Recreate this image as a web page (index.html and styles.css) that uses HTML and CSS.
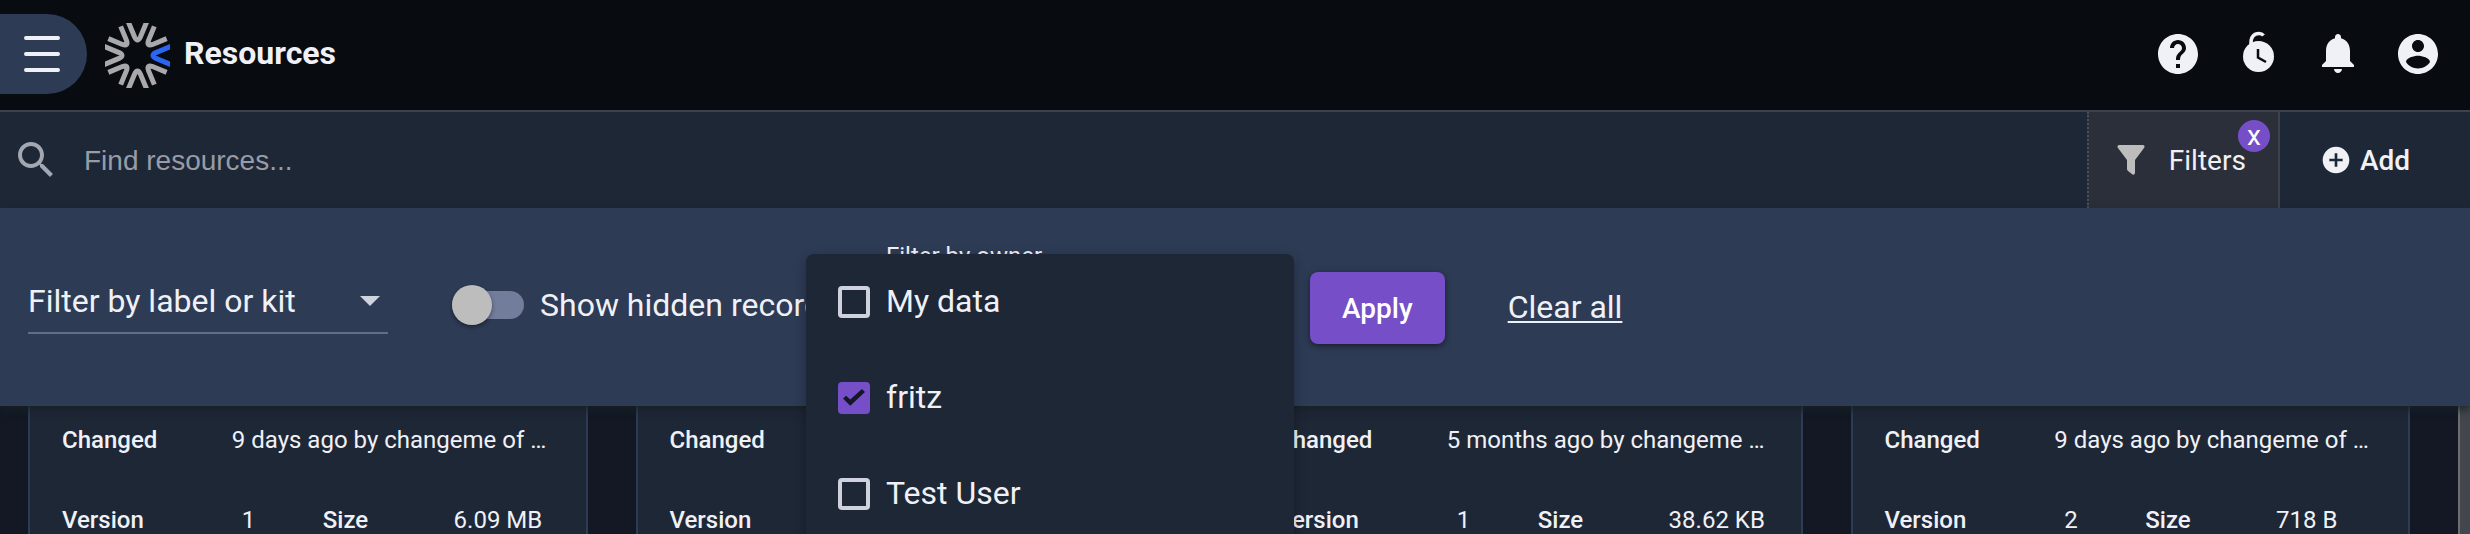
FILE: index.html
```html
<!DOCTYPE html>
<html lang="en">
<head>
<meta charset="utf-8">
<title>Resources</title>
<link rel="stylesheet" href="styles.css">
</head>
<body>
<header class="topbar">
  <button class="menu-toggle" aria-label="Open menu">
    <svg width="36" height="36" viewBox="0 0 36 36"><path d="M2 2H34M2 18H34M2 34H34" stroke="#f0f1f6" stroke-width="4" stroke-linecap="round"/></svg>
  </button>
  <svg class="logo" width="65" height="65" viewBox="-32.5 -32.5 65 65" fill="none" stroke-width="5">
    <defs>
      <path id="ray" d="M38 -11L18.500 -2.900Q12.500 0 18.500 2.900L38 11"/>
      <path id="ray-short" d="M32.500 -8.700L18.500 -2.900Q12.500 0 18.500 2.900L32.500 8.700"/>
    </defs>
    <g stroke="#a9a9ab">
      <use href="#ray-short" transform="rotate(45)"/>
      <use href="#ray" transform="rotate(90)"/>
      <use href="#ray-short" transform="rotate(135)"/>
      <use href="#ray" transform="rotate(180)"/>
      <use href="#ray-short" transform="rotate(225)"/>
      <use href="#ray" transform="rotate(270)"/>
      <use href="#ray-short" transform="rotate(315)"/>
    </g>
    <use href="#ray" stroke="#2b66f0"/>
  </svg>
  <h1 class="title">Resources</h1>
  <nav class="tools">
    <button class="tool" aria-label="Help"><svg width="48" height="48" viewBox="0 0 24 24"><path d="M12 2C6.480 2 2 6.480 2 12s4.480 10 10 10 10-4.480 10-10S17.520 2 12 2zm1 17h-2v-2h2v2zm2.070-7.750l-.9.920C13.450 12.900 13 13.500 13 15h-2v-.5c0-1.100.45-2.100 1.170-2.830l1.240-1.260c.37-.36.590-.86.590-1.410 0-1.100-.9-2-2-2s-2 .9-2 2H8c0-2.210 1.790-4 4-4s4 1.790 4 4c0 .88-.36 1.680-.93 2.250z"/></svg></button>
    <button class="tool" aria-label="Timer"><svg width="48" height="48" viewBox="0 0 48 48"><circle cx="24.500" cy="26.500" r="15.500"/><path d="M17 14C16.500 7 20 3.500 25 3.500Q28 3.500 29.500 5.500" fill="none" stroke="#f0f1f6" stroke-width="3.500"/><path d="M24 19V27.500L32 32" fill="none" stroke="#080b10" stroke-width="2.500"/></svg></button>
    <button class="tool" aria-label="Notifications"><svg width="48" height="48" viewBox="0 0 24 24"><path d="M12 21.500c1.100 0 2-.9 2-2h-4c0 1.100.89 2 2 2zm6-6v-5c0-3.070-1.640-5.640-4.500-6.320V3.500c0-.83-.67-1.500-1.500-1.500s-1.500.67-1.500 1.500v.68C7.630 4.860 6 7.420 6 10.500v5l-2 2v1h16v-1l-2-2z"/></svg></button>
    <button class="tool" aria-label="Account"><svg width="48" height="48" viewBox="0 0 24 24"><path d="M12 2C6.480 2 2 6.480 2 12s4.480 10 10 10 10-4.480 10-10S17.520 2 12 2zm0 3c1.660 0 3 1.340 3 3s-1.340 3-3 3-3-1.340-3-3 1.340-3 3-3zm0 14.200c-2.500 0-4.710-1.280-6-3.220.03-1.990 4-3.080 6-3.080 1.990 0 5.970 1.090 6 3.080-1.290 1.940-3.500 3.220-6 3.220z"/></svg></button>
  </nav>
</header>

<div class="searchbar">
  <label class="search">
    <svg width="48" height="48" viewBox="0 0 24 24" fill="#a3a7b1"><path d="M15.500 14h-.79l-.28-.27C15.410 12.590 16 11.110 16 9.500 16 5.910 13.090 3 9.500 3S3 5.910 3 9.500 5.910 16 9.500 16c1.610 0 3.090-.59 4.230-1.570l.27.28v.79l5 4.990L20.490 19l-4.990-5zm-6 0C7.010 14 5 11.990 5 9.500S7.010 5 9.500 5 14 7.010 14 9.500 11.990 14 9.500 14z"/></svg>
    <input class="search-input" type="text" aria-label="Find resources" placeholder="Find resources...">
  </label>
  <button class="filters">
    <svg width="28" height="30" viewBox="0 0 28 30" fill="#bdbdbd"><path d="M2 0H26Q28.500 .5 27 3L18 15V28Q17.500 30.500 15.500 29.500L11 26Q10 25 10 24V15L1 3Q-.5 .5 2 0z"/></svg>
    <span class="action-text">Filters</span>
    <span class="badge">x</span>
  </button>
  <button class="add">
    <svg width="32" height="32" viewBox="0 0 24 24" fill="#f0f1f6"><path d="M12 2C6.480 2 2 6.480 2 12s4.480 10 10 10 10-4.480 10-10S17.520 2 12 2zm5 11h-4v4h-2v-4H7v-2h4V7h2v4h4v2z"/></svg>
    <span class="action-text">Add</span>
  </button>
</div>

<section class="filter-panel">
  <div class="kit-field">
    <select class="kit-select" aria-label="Filter by label or kit"><option>Filter by label or kit</option></select>
    <svg class="arrow" width="20" height="10" viewBox="0 0 20 10"><path d="M0 0H20L10 10z" fill="#cfd3df"/></svg>
  </div>
  <label class="switch">
    <input class="switch-input" type="checkbox" role="switch">
    <span>Show hidden records</span>
  </label>
  <div class="owner-field">
    <label class="owner-label" for="owner">Filter by owner</label>
    <select class="owner-select" id="owner"><option>fritz</option></select>
    <div class="owner-menu">
      <label class="option"><input class="check" type="checkbox"><span class="option-text">My data</span></label>
      <label class="option"><input class="check" type="checkbox" checked><span class="option-text">fritz</span></label>
      <label class="option"><input class="check" type="checkbox"><span class="option-text">Test User</span></label>
    </div>
  </div>
  <button class="apply">Apply</button>
  <a class="clear" href="#">Clear all</a>
</section>

<main class="results">
  <div class="cards">
    <article class="card">
      <dl class="row changed"><dt>Changed</dt><dd>9 days ago by changeme of …</dd></dl>
      <dl class="row facts"><dt>Version</dt><dd>1</dd><dt>Size</dt><dd>6.09 MB</dd></dl>
    </article>
    <article class="card">
      <dl class="row changed"><dt>Changed</dt><dd>9 days ago by changeme of …</dd></dl>
      <dl class="row facts"><dt>Version</dt><dd>1</dd><dt>Size</dt><dd>6.09 MB</dd></dl>
    </article>
    <article class="card">
      <dl class="row changed"><dt>Changed</dt><dd>5 months ago by changeme …</dd></dl>
      <dl class="row facts"><dt>Version</dt><dd>1</dd><dt>Size</dt><dd>38.62 KB</dd></dl>
    </article>
    <article class="card">
      <dl class="row changed"><dt>Changed</dt><dd>9 days ago by changeme of …</dd></dl>
      <dl class="row facts"><dt>Version</dt><dd>2</dd><dt>Size</dt><dd>718 B</dd></dl>
    </article>
  </div>
  <div class="scrollbar"></div>
</main>
</body>
</html>
```
FILE: styles.css
```css
* { box-sizing: border-box; }

body {
  margin: 0;
  height: 100vh;
  overflow: hidden;
  display: flex;
  flex-direction: column;
  background: #131824;
  color: #f0f1f6;
  font-family: Roboto, "Liberation Sans", sans-serif;
  font-size: 32px;
  line-height: 38px;
}

button {
  font: inherit;
  color: inherit;
  background: none;
  border: 0;
  padding: 0;
  cursor: pointer;
}

svg { display: block; flex: none; }

.topbar {
  display: flex;
  align-items: center;
  flex: none;
  height: 112px;
  padding: 0 28px 2px 0;
  background: #080b10;
  border-bottom: 2px solid #3c434d;
}

.menu-toggle {
  width: 87px;
  height: 80px;
  padding-left: 24px;
  background: #2d3b55;
  border-radius: 0 40px 40px 0;
}

.logo { margin: 2px 14px 0 18px; overflow: hidden; }

.title { margin: 0; padding-bottom: 2px; font-size: 32px; font-weight: 700; }

.tools { display: flex; gap: 32px; margin-left: auto; }

.tool { fill: #f0f1f6; }

.searchbar {
  display: flex;
  flex: none;
  height: 96px;
  background: #1e2736;
  font-size: 28px;
}

.search {
  display: flex;
  align-items: center;
  gap: 24px;
  flex: 1;
  padding-left: 12px;
}

.search-input {
  flex: 1;
  padding: 2px 0 0;
  border: 0;
  outline: 0;
  background: none;
  color: #f0f1f6;
  font-family: "Liberation Sans", Arial, sans-serif;
  font-size: 28px;
}

.search-input::placeholder { color: #989ca5; opacity: 1; }

.action-text { padding-top: 2px; }

.filters {
  position: relative;
  display: flex;
  align-items: center;
  gap: 24px;
  padding: 0 32px 0 28px;
  background: #2b2f39;
  border-left: 2px dotted #4a4f58;
  border-right: 2px solid #3c434d;
}

.badge {
  position: absolute;
  top: 8px;
  right: 8px;
  width: 32px;
  height: 32px;
  border-radius: 50%;
  background: #754ec8;
  color: #fff;
  line-height: 32px;
}

.add {
  display: flex;
  align-items: center;
  gap: 8px;
  padding: 0 60px 0 40px;
  font-weight: 500;
}

.filter-panel {
  position: relative;
  z-index: 1;
  display: flex;
  align-items: center;
  flex: none;
  padding: 34px 28px;
  background: #2d3b55;
  box-shadow: 0 4px 8px rgba(22, 32, 38, 0.8);
}

.kit-field {
  display: flex;
  align-items: center;
  width: 360px;
  height: 54px;
  padding: 0 8px 10px 0;
  border-bottom: 2px solid #626d8b;
}

.kit-select {
  flex: 1;
  min-width: 0;
  padding: 0;
  border: 0;
  outline: 0;
  appearance: none;
  background: none;
  color: inherit;
  font: inherit;
}

.switch {
  display: flex;
  align-items: center;
  gap: 16px;
  width: 386px;
  margin-left: 64px;
  padding-bottom: 4px;
  white-space: nowrap;
}

.switch-input {
  display: flex;
  align-items: center;
  flex: none;
  width: 72px;
  height: 28px;
  margin: 0;
  appearance: none;
  border-radius: 14px;
  background: #727d9b;
}

.switch-input::before {
  content: "";
  width: 40px;
  height: 40px;
  border-radius: 50%;
  background: #bdbdbd;
  box-shadow: 0 2px 4px rgba(0, 0, 0, 0.4);
}

.owner-field {
  position: relative;
  display: flex;
  flex-direction: column;
  width: 424px;
  height: 130px;
  padding-left: 48px;
}

.owner-label { font-size: 24px; line-height: 28px; }

.owner-select {
  height: 54px;
  border: 0;
  border-bottom: 2px solid #626d8b;
  appearance: none;
  background: none;
  color: inherit;
  font: inherit;
}

.owner-menu {
  position: absolute;
  top: 12px;
  left: -32px;
  right: -32px;
  border-radius: 8px;
  background: #1e2736;
  box-shadow: 0 4px 12px rgba(0, 0, 0, 0.3);
}

.option {
  display: flex;
  align-items: center;
  gap: 16px;
  height: 96px;
  padding: 0 32px;
}

.option-text { padding-bottom: 2px; }

.check {
  display: grid;
  place-items: center;
  width: 32px;
  height: 32px;
  margin: 0;
  appearance: none;
  border: 4px solid #cfd2de;
  border-radius: 4px;
}

.check:checked { border-color: #754ec8; background: #754ec8; }

.check:checked::before {
  content: "";
  width: 22px;
  height: 18px;
  background: #131824;
  clip-path: polygon(0 53%, 14% 37%, 33% 59%, 86% 0, 100% 16%, 33% 93%);
}

.apply {
  height: 72px;
  margin: 2px 0 0 48px;
  padding: 2px 32px 0;
  border-radius: 8px;
  background: #754ec8;
  box-shadow: 0 2px 6px rgba(0, 0, 0, 0.5);
  color: #fff;
  font-size: 28px;
  font-weight: 500;
}

.clear {
  margin-left: 63px;
  color: inherit;
  text-decoration-thickness: 2px;
  text-underline-offset: 3px;
}

.results { display: flex; flex: 1; min-height: 0; }

.cards {
  display: grid;
  grid-template-columns: repeat(4, minmax(0, 1fr));
  gap: 48px;
  flex: 1;
  padding: 0 48px 0 28px;
}

.card {
  padding: 20px 32px 0;
  background: #1e2736;
  border: 2px solid #2d3b55;
  border-width: 0 2px;
  font-size: 24px;
  line-height: 28px;
}

.row { display: grid; margin: 0; }

.row + .row { margin-top: 52px; }

.row dt { font-weight: 500; }

.row dd {
  margin: 0;
  overflow: hidden;
  white-space: nowrap;
  text-overflow: ellipsis;
}

.changed { grid-template-columns: 170fr 322fr; }

.facts { grid-template-columns: 180fr 81fr 131fr 100fr; }

.scrollbar {
  width: 12px;
  background: #43464d;
  border-left: 2px solid #6d6e70;
}
```
